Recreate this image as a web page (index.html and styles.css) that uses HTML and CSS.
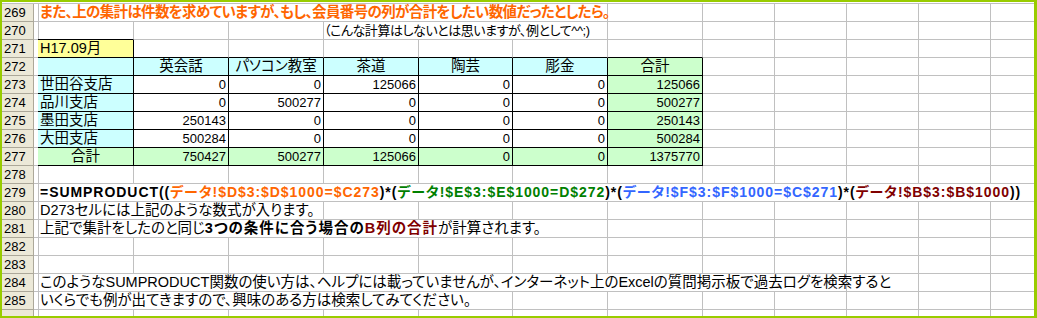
FILE: index.html
```html
<!DOCTYPE html>
<html lang="ja">
<head>
<meta charset="utf-8">
<title>SUMPRODUCT</title>
<link rel="stylesheet" href="styles.css">
</head>
<body>
<div class="sheet">
  <div class="grid">
    <div class="row">
      <div class="rh">269</div><div class="c"></div>
      <div class="c txt orange bold note s-b-g">また、上の集計は件数を求めていますが、もし、会員番号の列が合計をしたい数値だったとしたら。</div>
      <div class="c"></div><div class="c"></div><div class="c"></div><div class="c"></div><div class="c"></div><div class="c"></div>
    </div>
    <div class="row">
      <div class="rh">270</div><div class="c"></div>
      <div class="c bk-b"></div><div class="c"></div><div class="c"></div>
      <div class="c txt aside s-e-g">（こんな計算はしないとは思いますが、例として^^;)</div>
      <div class="c"></div><div class="c"></div><div class="c"></div><div class="c"></div><div class="c"></div><div class="c"></div>
    </div>
    <div class="row">
      <div class="rh">271</div><div class="c bk-r"></div>
      <div class="c t yellow txt">H17.09月</div>
      <div class="c bk-b"></div><div class="c bk-b"></div><div class="c bk-b"></div><div class="c bk-b"></div><div class="c bk-b"></div><div class="c bk-b"></div>
      <div class="c"></div><div class="c"></div><div class="c"></div><div class="c"></div><div class="c"></div>
    </div>
    <div class="row">
      <div class="rh">272</div><div class="c bk-r"></div>
      <div class="c t cyan"></div>
      <div class="c t cyan hd">英会話</div>
      <div class="c t cyan hd">パソコン教室</div>
      <div class="c t cyan hd">茶道</div>
      <div class="c t cyan hd">陶芸</div>
      <div class="c t cyan hd">彫金</div>
      <div class="c t green hd">合計</div>
      <div class="c"></div><div class="c"></div><div class="c"></div><div class="c"></div><div class="c"></div>
    </div>
    <div class="row">
      <div class="rh">273</div><div class="c bk-r"></div>
      <div class="c t cyan txt">世田谷支店</div>
      <div class="c t n">0</div><div class="c t n">0</div><div class="c t n">125066</div><div class="c t n">0</div><div class="c t n">0</div>
      <div class="c t green n">125066</div>
      <div class="c"></div><div class="c"></div><div class="c"></div><div class="c"></div><div class="c"></div>
    </div>
    <div class="row">
      <div class="rh">274</div><div class="c bk-r"></div>
      <div class="c t cyan txt">品川支店</div>
      <div class="c t n">0</div><div class="c t n">500277</div><div class="c t n">0</div><div class="c t n">0</div><div class="c t n">0</div>
      <div class="c t green n">500277</div>
      <div class="c"></div><div class="c"></div><div class="c"></div><div class="c"></div><div class="c"></div>
    </div>
    <div class="row">
      <div class="rh">275</div><div class="c bk-r"></div>
      <div class="c t cyan txt">墨田支店</div>
      <div class="c t n">250143</div><div class="c t n">0</div><div class="c t n">0</div><div class="c t n">0</div><div class="c t n">0</div>
      <div class="c t green n">250143</div>
      <div class="c"></div><div class="c"></div><div class="c"></div><div class="c"></div><div class="c"></div>
    </div>
    <div class="row">
      <div class="rh">276</div><div class="c bk-r"></div>
      <div class="c t cyan txt">大田支店</div>
      <div class="c t n">500284</div><div class="c t n">0</div><div class="c t n">0</div><div class="c t n">0</div><div class="c t n">0</div>
      <div class="c t green n">500284</div>
      <div class="c"></div><div class="c"></div><div class="c"></div><div class="c"></div><div class="c"></div>
    </div>
    <div class="row">
      <div class="rh">277</div><div class="c bk-r"></div>
      <div class="c t green hd">合計</div>
      <div class="c t green n">750427</div><div class="c t green n">500277</div><div class="c t green n">125066</div><div class="c t green n">0</div><div class="c t green n">0</div>
      <div class="c t green n">1375770</div>
      <div class="c"></div><div class="c"></div><div class="c"></div><div class="c"></div><div class="c"></div>
    </div>
    <div class="row">
      <div class="rh">278</div><div class="c"></div>
      <div class="c"></div><div class="c"></div><div class="c"></div><div class="c"></div><div class="c"></div><div class="c"></div><div class="c"></div>
      <div class="c"></div><div class="c"></div><div class="c"></div><div class="c"></div><div class="c"></div>
    </div>
    <div class="row">
      <div class="rh">279</div><div class="c"></div>
      <div class="c txt bold formula s-b-m">=SUMPRODUCT((<span class="orange">データ!$D$3:$D$1000=$C273</span>)*(<span class="dgreen">データ!$E$3:$E$1000=D$272</span>)*(<span class="blue">データ!$F$3:$F$1000=$C$271</span>)*(<span class="dred">データ!$B$3:$B$1000</span>))</div>
    </div>
    <div class="row">
      <div class="rh">280</div><div class="c"></div>
      <div class="c txt s-b-d">D273セルには上記のような数式が入ります。</div>
      <div class="c"></div><div class="c"></div><div class="c"></div><div class="c"></div>
      <div class="c"></div><div class="c"></div><div class="c"></div><div class="c"></div><div class="c"></div>
    </div>
    <div class="row">
      <div class="rh">281</div><div class="c"></div>
      <div class="c txt s-b-g">上記で集計をしたのと同じ<b class="wide">3つの条件に合う場合の</b><b class="wide dred">B列の合計</b>が計算されます。</div>
      <div class="c"></div><div class="c"></div><div class="c"></div><div class="c"></div><div class="c"></div><div class="c"></div>
    </div>
    <div class="row">
      <div class="rh">282</div><div class="c"></div>
      <div class="c"></div><div class="c"></div><div class="c"></div><div class="c"></div><div class="c"></div><div class="c"></div><div class="c"></div>
      <div class="c"></div><div class="c"></div><div class="c"></div><div class="c"></div><div class="c"></div>
    </div>
    <div class="row">
      <div class="rh">283</div><div class="c"></div>
      <div class="c"></div><div class="c"></div><div class="c"></div><div class="c"></div><div class="c"></div><div class="c"></div><div class="c"></div>
      <div class="c"></div><div class="c"></div><div class="c"></div><div class="c"></div><div class="c"></div>
    </div>
    <div class="row">
      <div class="rh">284</div><div class="c"></div>
      <div class="c txt s-b-k">このようなSUMPRODUCT関数の使い方は、ヘルプには載っていませんが、インターネット上のExcelの質問掲示板で過去ログを検索すると</div>
      <div class="c"></div><div class="c"></div><div class="c"></div>
    </div>
    <div class="row">
      <div class="rh">285</div><div class="c"></div>
      <div class="c txt s-b-f">いくらでも例が出てきますので、興味のある方は検索してみてください。</div>
      <div class="c"></div><div class="c"></div><div class="c"></div><div class="c"></div><div class="c"></div><div class="c"></div><div class="c"></div>
    </div>
    <div class="row">
      <div class="rh"></div><div class="c"></div>
      <div class="c"></div><div class="c"></div><div class="c"></div><div class="c"></div><div class="c"></div><div class="c"></div><div class="c"></div>
      <div class="c"></div><div class="c"></div><div class="c"></div><div class="c"></div><div class="c"></div>
    </div>
  </div>
</div>
</body>
</html>
```

FILE: styles.css
```css
html, body {
  margin: 0;
  padding: 0;
  background: #ffffff;
}

.sheet {
  box-sizing: border-box;
  width: 1037px;
  height: 318px;
  border-style: solid;
  border-color: #99cc00;
  border-width: 2px 3px 2px 2px;
  padding-top: 1px;
  overflow: hidden;
  background: #ffffff;
}

.grid {
  border-top: 1px solid #c0c0c0;
}

.row {
  display: grid;
  grid-template-columns: 32px 4px 96px 95px 95px 95px 94px 95px 95px 72px 72px 72px 72px 1fr;
  height: 18px;
}

.rh {
  box-sizing: border-box;
  background: #ece9d8;
  border-right: 1px solid #aca899;
  border-bottom: 1px solid #aca899;
  font: 13px/17px "Liberation Sans", Arial, sans-serif;
  color: #000;
  padding-left: 2px;
}

.c {
  box-sizing: border-box;
  border-right: 1px solid #c0c0c0;
  border-bottom: 1px solid #c0c0c0;
  white-space: nowrap;
  overflow: visible;
  min-width: 0;
  font: 14.5px/17px "Liberation Sans", "Noto Sans CJK JP", sans-serif;
  font-feature-settings: "palt";
  color: #000;
  padding: 0 2px;
}

.row > .c:last-child {
  border-right: none;
}

.txt {
  text-align: left;
}

.bold, b {
  font-weight: bold;
}

.note {
  letter-spacing: -0.65px;
}

.aside {
  font-size: 13px;
  letter-spacing: -0.45px;
  padding-left: 0;
}

.wide {
  letter-spacing: 1px;
}

.orange { color: #ff6600; }
.dgreen { color: #008000; }
.blue { color: #3366ff; }
.dred { color: #800000; }

.formula {
  font-size: 14px;
  letter-spacing: 0.95px;
}

.s-b-g { grid-column: 3 / 9; }
.s-e-g { grid-column: 6 / 9; }
.s-b-m { grid-column: 3 / 15; }
.s-b-d { grid-column: 3 / 6; }
.s-b-k { grid-column: 3 / 12; }
.s-b-f { grid-column: 3 / 8; }

.bk-r { border-right-color: #000; }
.bk-b { border-bottom-color: #000; }
.t { border-right-color: #000; border-bottom-color: #000; }

.yellow { background: #ffff99; }
.cyan { background: #ccffff; }
.green { background: #ccffcc; }

.hd { text-align: center; }

.n {
  text-align: right;
  font-size: 13px;
}
```
